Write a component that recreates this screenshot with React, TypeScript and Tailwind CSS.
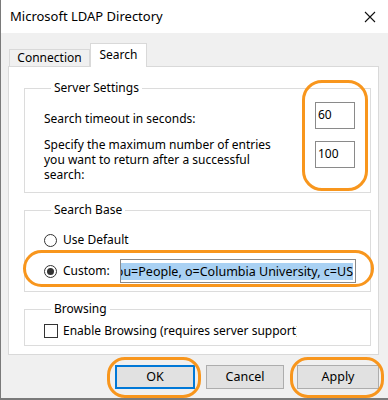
import React from "react";

const font = { fontFamily: '"Noto Sans", "Segoe UI", sans-serif' };

function Radio({ checked }: { checked?: boolean }) {
  return (
    <span className="w-[13px] h-[13px] rounded-full border border-[#333333] bg-white flex items-center justify-center shrink-0">
      {checked ? <span className="w-[7px] h-[7px] rounded-full bg-[#333333]" /> : null}
    </span>
  );
}

export default function App() {
  return (
    <div
      className="relative w-[388px] h-[400px] overflow-hidden bg-[#f0f0f0] border-l border-[#7a7a7a] text-[12px] text-black"
      style={font}
    >
      {/* Title bar */}
      <div className="h-[33px] bg-white flex items-center justify-between pl-[9px] pr-[10px]">
        <span className="text-[13px]">Microsoft LDAP Directory</span>
        <svg width="12" height="12" viewBox="0 0 12 12" className="mr-[2px]">
          <path d="M1 1 L11 11 M11 1 L1 11" stroke="#111" strokeWidth="1.1" />
        </svg>
      </div>

      {/* Tabs */}
      <div className="flex items-end h-[33px] pl-[8px]">
        <div className="h-[17px] w-[81px] border border-b-0 border-[#d9d9d9] bg-[#f0f0f0] flex items-center justify-center">
          Connection
        </div>
        <div className="relative z-10 h-[24px] w-[57px] -mb-px border border-b-0 border-[#d9d9d9] bg-white flex items-start justify-center pt-[2px]">
          Search
        </div>
      </div>

      {/* Panel */}
      <div className="ml-[7px] w-[371px] h-[289px] border border-[#d9d9d9] bg-white pl-[15px] pr-[7px] pt-[13px]">
        {/* Server Settings */}
        <fieldset className="border border-[#dcdcdc] pl-[19px] pr-[15px] pb-[10px] h-[113px]">
          <legend className="ml-[7px] px-[3px] leading-[16px]">Server Settings</legend>
          <div className="flex justify-between items-start mt-[6px]">
            <span className="mt-[9px] leading-[15px]">Search timeout in seconds:</span>
            <div className="w-[40px] h-[27px] border border-[#8a8a8a] bg-white flex items-center pl-[2px] pb-[2px]">60</div>
          </div>
          <div className="flex justify-between items-start mt-[8px]">
            <div className="flex flex-col">
              <span className="leading-[15px]">Specify the maximum number of entries</span>
              <span className="leading-[15px]">you want to return after a successful</span>
              <span className="leading-[15px]">search:</span>
            </div>
            <div className="mt-[4px] w-[40px] h-[27px] border border-[#8a8a8a] bg-white flex items-center pl-[2px] pb-[2px]">100</div>
          </div>
        </fieldset>

        {/* Search Base */}
        <fieldset className="mt-[9px] border border-[#dcdcdc] pl-[19px] pr-[14px] pb-[8px] h-[90px]">
          <legend className="ml-[7px] px-[3px] leading-[16px]">Search Base</legend>
          <div className="flex items-center gap-[6px] h-[16px] mt-[14px]">
            <Radio />
            <span>Use Default</span>
          </div>
          <div className="flex items-center mt-[11px] h-[24px]">
            <Radio checked />
            <span className="ml-[6px] w-[57px]">Custom:</span>
            <div className="w-[236px] h-[24px] border border-[#8a8a8a] bg-white overflow-hidden flex items-center justify-end pr-[2px]">
              <span className="bg-[#a9d1f3] whitespace-nowrap leading-[17px] shrink-0 text-[12.5px]">
                ou=People, o=Columbia University, c=US
              </span>
            </div>
          </div>
        </fieldset>

        {/* Browsing */}
        <fieldset className="mt-[9px] border border-[#dcdcdc] pl-[19px] pb-[6px] h-[45px]">
          <legend className="ml-[7px] px-[3px] leading-[16px]">Browsing</legend>
          <div className="flex items-center mt-[7px] h-[14px]">
            <span className="w-[14px] h-[14px] border border-[#333333] bg-white shrink-0" />
            <span className="ml-[5px] w-[234px] overflow-hidden whitespace-nowrap">
              Enable Browsing (requires server support)
            </span>
          </div>
        </fieldset>
      </div>

      {/* Buttons */}
      <div className="flex mt-[10px] pl-[114px] h-[24px] text-[12.5px]">
        <button className="w-[80px] h-[24px] border-2 border-[#0078d7] bg-[#e1e1e1] flex items-center justify-center">
          OK
        </button>
        <button className="ml-[11px] w-[78px] h-[24px] border border-[#adadad] bg-[#e1e1e1] flex items-center justify-center">
          Cancel
        </button>
        <button className="ml-[13px] w-[82px] h-[24px] border border-[#adadad] bg-[#e1e1e1] flex items-center justify-center">
          Apply
        </button>
      </div>

      {/* bottom window border */}
      <div className="absolute left-0 right-0 top-[398px] h-[2px] bg-[#7a7a7a]" />

      {/* Orange annotation overlays */}
      <div className="absolute left-[301px] top-[80px] w-[66px] h-[111px] border-[3px] border-[#f8961d] rounded-[20px] pointer-events-none" />
      <div className="absolute left-[22px] top-[250px] w-[351px] h-[37px] border-[3px] border-[#f8961d] rounded-full pointer-events-none" />
      <div className="absolute left-[106px] top-[357px] w-[94px] h-[41px] border-[3px] border-[#f8961d] rounded-[18px] pointer-events-none" />
      <div className="absolute left-[289px] top-[357px] w-[94px] h-[41px] border-[3px] border-[#f8961d] rounded-[18px] pointer-events-none" />
    </div>
  );
}
